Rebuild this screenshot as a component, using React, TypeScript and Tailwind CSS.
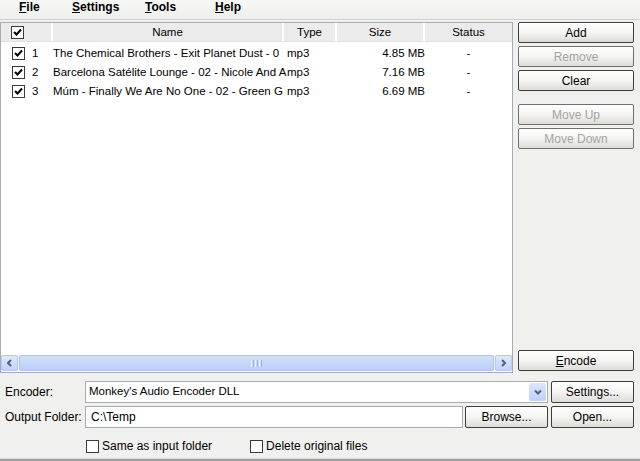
import React from "react";

type Track = { no: number; name: string; type: string; size: string; status: string };

const tracks: Track[] = [
  { no: 1, name: "The Chemical Brothers - Exit Planet Dust - 0", type: "mp3", size: "4.85 MB", status: "-" },
  { no: 2, name: "Barcelona Satélite Lounge - 02 - Nicole And A", type: "mp3", size: "7.16 MB", status: "-" },
  { no: 3, name: "Múm - Finally We Are No One - 02 - Green G", type: "mp3", size: "6.69 MB", status: "-" },
];

function Check({ checked }: { checked?: boolean }) {
  return (
    <div className="w-[13px] h-[13px] border border-[#3a3a3a] bg-white flex items-center justify-center shrink-0">
      {checked && (
        <svg width="9" height="9" viewBox="0 0 9 9">
          <path d="M1 4 L3.5 6.5 L8 1.5" stroke="#000" strokeWidth="2" fill="none" />
        </svg>
      )}
    </div>
  );
}

function Btn({ children, disabled, className = "" }: { children: React.ReactNode; disabled?: boolean; className?: string }) {
  return (
    <div
      className={`flex items-center justify-center rounded-[2px] border bg-linear-to-b from-white via-[#f4f4f2] to-[#dedcd6] ${
        disabled ? "border-[#6f6f6f] text-[#a3a3a3]" : "border-[#3e3e3e] text-black"
      } ${className}`}
    >
      {children}
    </div>
  );
}

function Chevron({ dir }: { dir: "left" | "right" | "down" }) {
  const d = dir === "left" ? "M6 2 L3 5 L6 8" : dir === "right" ? "M3 2 L6 5 L3 8" : "M2 3.5 L5 6.5 L8 3.5";
  return (
    <svg width="9" height="10" viewBox="0 0 9 10">
      <path d={d} stroke="#4d6185" strokeWidth="2" fill="none" />
    </svg>
  );
}

export default function App() {
  return (
    <div
      className="w-[640px] h-[461px] bg-[#f0f0ee] text-[11px] text-black overflow-hidden flex flex-col"
      style={{ fontFamily: '"Liberation Sans", Arial, sans-serif' }}
    >
      {/* menu */}
      <div className="h-[20px] border-b border-[#cfcfcf] bg-linear-to-b from-[#f7f7f5] to-[#efefed] flex items-start pl-[19px] text-[12px] font-bold leading-[15px] shrink-0">
        <span className="w-[53px]"><u>F</u>ile</span>
        <span className="w-[73px]"><u>S</u>ettings</span>
        <span className="w-[70px]"><u>T</u>ools</span>
        <span><u>H</u>elp</span>
      </div>

      <div className="flex mt-[2px] h-[351px] shrink-0">
        {/* list */}
        <div className="w-[513px] border border-[#a5acb5] bg-white flex flex-col">
          <div className="h-[19px] bg-[#ebebeb] flex items-center shrink-0 border-b border-[#e2e2e2] text-[11.5px]">
            <div className="w-[52px] h-full flex items-center pl-[10px] border-r-2 border-white">
              <Check checked />
            </div>
            <div className="w-[231px] text-center border-r-2 border-white h-full leading-[19px]">Name</div>
            <div className="w-[53px] text-center border-r-2 border-white h-full leading-[19px]">Type</div>
            <div className="w-[88px] text-center border-r-2 border-white h-full leading-[19px]">Size</div>
            <div className="flex-1 text-center h-full leading-[19px]">Status</div>
          </div>
          <div className="flex-1 pt-[2px] text-[11.5px]">
            {tracks.map((t) => (
              <div key={t.no} className="h-[19px] flex items-center">
                <div className="w-[52px] flex items-center pl-[11px]">
                  <Check checked />
                  <span className="ml-[7px]">{t.no}</span>
                </div>
                <div className="w-[234px] whitespace-nowrap">{t.name}</div>
                <div className="w-[52px]">{t.type}</div>
                <div className="w-[86px] text-right">{t.size}</div>
                <div className="flex-1 text-center">{t.status}</div>
              </div>
            ))}
          </div>
          {/* horizontal scrollbar */}
          <div className="h-[16px] flex items-stretch shrink-0 mb-[1px] bg-[#f3f2ee]">
            <div className="w-[17px] bg-linear-to-b from-[#dfe8fd] to-[#c2d2f9] border border-[#b7c8f4] rounded-[2px] flex items-center justify-center">
              <Chevron dir="left" />
            </div>
            <div className="flex-1 mx-[1px] bg-linear-to-b from-[#d3dffc] to-[#bccef8] border border-[#b0c4f2] rounded-[2px] flex items-center justify-center">
              <div className="flex gap-[1px]">
                <div className="w-[1px] h-[7px] bg-[#eef3ff]" />
                <div className="w-[1px] h-[7px] bg-[#9eb2e0]" />
                <div className="w-[1px] h-[7px] bg-[#eef3ff]" />
                <div className="w-[1px] h-[7px] bg-[#9eb2e0]" />
                <div className="w-[1px] h-[7px] bg-[#eef3ff]" />
                <div className="w-[1px] h-[7px] bg-[#9eb2e0]" />
              </div>
            </div>
            <div className="w-[17px] bg-linear-to-b from-[#dfe8fd] to-[#c2d2f9] border border-[#b7c8f4] rounded-[2px] flex items-center justify-center">
              <Chevron dir="right" />
            </div>
          </div>
        </div>

        {/* buttons */}
        <div className="ml-[5px] w-[116px] flex flex-col text-[12px]">
          <Btn className="h-[21px]">Add</Btn>
          <Btn className="h-[21px] mt-[3px]" disabled>Remove</Btn>
          <Btn className="h-[21px] mt-[3px]">Clear</Btn>
          <Btn className="h-[21px] mt-[13px]" disabled>Move Up</Btn>
          <Btn className="h-[21px] mt-[3px]" disabled>Move Down</Btn>
          <Btn className="h-[21px] mt-auto mb-[2px]">
            <span><u>E</u>ncode</span>
          </Btn>
        </div>
      </div>

      {/* encoder */}
      <div className="flex items-center mt-[8px] h-[22px] text-[12px]">
        <div className="w-[85px] pl-[5px]">Encoder:</div>
        <div className="w-[463px] h-full border border-[#a5acb5] bg-white flex items-center">
          <div className="flex-1 pl-[3px] text-[11.5px]">Monkey's Audio Encoder DLL</div>
          <div className="w-[17px] h-[18px] mr-[1px] bg-linear-to-b from-[#dde7fd] to-[#bfd0f8] rounded-[2px] flex items-center justify-center">
            <Chevron dir="down" />
          </div>
        </div>
        <Btn className="w-[83px] h-full ml-[3px]">Settings...</Btn>
      </div>

      {/* output folder */}
      <div className="flex items-center mt-[3px] h-[22px] text-[12px]">
        <div className="w-[85px] pl-[5px] whitespace-nowrap">Output Folder:</div>
        <div className="w-[378px] h-full border border-[#a5acb5] bg-white flex items-center pl-[5px]">C:\Temp</div>
        <Btn className="w-[83px] h-full ml-[2px]">Browse...</Btn>
        <Btn className="w-[83px] h-full ml-[3px]">Open...</Btn>
      </div>

      {/* options */}
      <div className="flex items-center mt-[11px] h-[14px] text-[12px]">
        <div className="ml-[86px] flex items-center">
          <Check />
          <span className="ml-[3px]">Same as input folder</span>
        </div>
        <div className="ml-[38px] flex items-center">
          <Check />
          <span className="ml-[3px]">Delete original files</span>
        </div>
      </div>

      <div className="mt-auto h-[3px] bg-[#a0a0a0] border-t border-[#d8d8d8]" />
    </div>
  );
}
